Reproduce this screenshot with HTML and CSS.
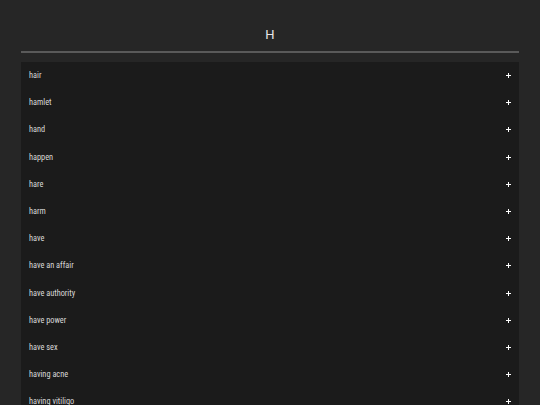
FILE: index.html
```html
<!DOCTYPE html>
<html lang="en">
<head>
<meta charset="utf-8">
<title>H</title>
<link rel="stylesheet" href="styles.css">
</head>
<body>
<div class="page">
  <header class="header">
    <h1 class="title">H</h1>
  </header>
  <ul class="list">
    <li class="row"><span class="word">hair</span><span class="plus"></span></li>
    <li class="row"><span class="word">hamlet</span><span class="plus"></span></li>
    <li class="row"><span class="word">hand</span><span class="plus"></span></li>
    <li class="row"><span class="word">happen</span><span class="plus"></span></li>
    <li class="row"><span class="word">hare</span><span class="plus"></span></li>
    <li class="row"><span class="word">harm</span><span class="plus"></span></li>
    <li class="row"><span class="word">have</span><span class="plus"></span></li>
    <li class="row"><span class="word">have an affair</span><span class="plus"></span></li>
    <li class="row"><span class="word">have authority</span><span class="plus"></span></li>
    <li class="row"><span class="word">have power</span><span class="plus"></span></li>
    <li class="row"><span class="word">have sex</span><span class="plus"></span></li>
    <li class="row"><span class="word">having acne</span><span class="plus"></span></li>
    <li class="row"><span class="word">having vitiligo</span><span class="plus"></span></li>
  </ul>
</div>
</body>
</html>
```

FILE: styles.css
```css
html, body {
  margin: 0;
  padding: 0;
  background: #262626;
  height: 100%;
  overflow: hidden;
}
.page {
  padding: 0 21px;
  font-family: "Roboto Condensed", Roboto, "Liberation Sans", sans-serif;
  font-stretch: 80%;
}
.header {
  padding-top: 27px;
  padding-bottom: 9px;
  border-bottom: 2px solid #5a5a5a;
  margin-bottom: 9px;
}
.title {
  margin: 0;
  text-align: center;
  font-family: Roboto, "Liberation Sans", sans-serif;
  font-stretch: 100%;
  font-weight: 400;
  font-size: 13px;
  line-height: 15px;
  color: #e6e6e6;
}
.list {
  list-style: none;
  margin: 0;
  padding: 0;
  background: #1b1b1b;
}
.row {
  height: 27.2px;
  box-sizing: border-box;
  padding: 0 8px;
  display: flex;
  align-items: center;
  justify-content: space-between;
}
.word {
  font-size: 8.3px;
  line-height: 9px;
  color: #d8d8d8;
}
.plus {
  position: relative;
  width: 5px;
  height: 5px;
}
.plus::before,
.plus::after {
  content: "";
  position: absolute;
  background: #ffffff;
}
.plus::before {
  left: 0;
  top: 2px;
  width: 5px;
  height: 1px;
}
.plus::after {
  left: 2px;
  top: 0;
  width: 1px;
  height: 5px;
}
```
